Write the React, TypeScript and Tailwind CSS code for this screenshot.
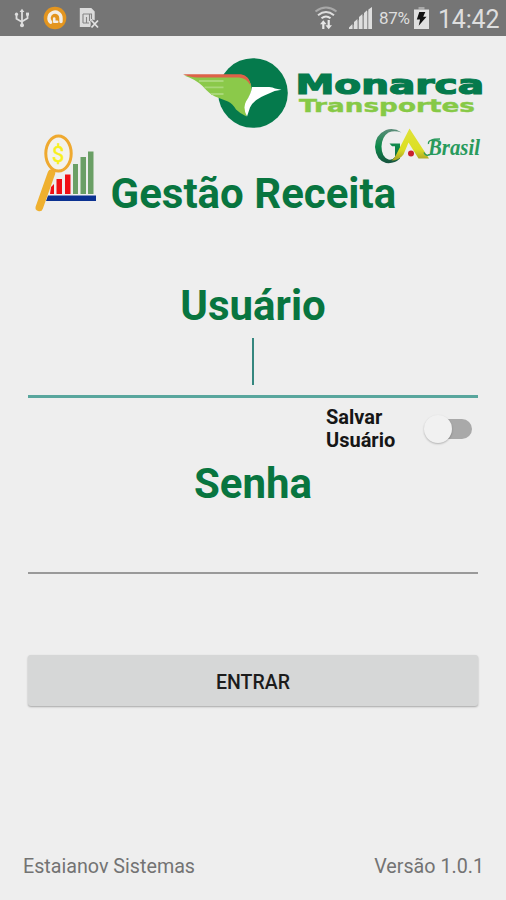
import React, { useState } from 'react'

function UsbIcon() {
    return (
        <svg className="w-[16px] h-[20px]" viewBox="0 0 16 20" fill="none" stroke="#dedede" strokeWidth="1.8">
            <path d="M8 2v15M2.5 6.5v4.3L8 14M13.5 6v4.3L8 13.5" />
            <path d="M5.6 4 8 .8 10.4 4z" fill="#dedede" stroke="none" />
            <circle cx="8" cy="17.2" r="2" fill="#dedede" stroke="none" />
            <circle cx="2.5" cy="6.2" r="1.6" fill="#dedede" stroke="none" />
            <path d="M12 4.6h3v3h-3z" fill="#dedede" stroke="none" />
        </svg>
    )
}

function AvastIcon() {
    return (
        <svg className="w-[24px] h-[24px]" viewBox="0 0 24 24" fill="none">
            <circle cx="12" cy="12" r="11.3" fill="#e3951f" />
            <path d="M7.6 16.2A6 6 0 1 1 18 12.2v3.4" stroke="#f3eee6" strokeWidth="3.4" strokeLinecap="round" />
            <path d="M11.2 12.5v3.2h3" stroke="#f3eee6" strokeWidth="2.6" strokeLinecap="round" strokeLinejoin="round" />
        </svg>
    )
}

function SimIcon() {
    return (
        <svg className="w-[20px] h-[22px]" viewBox="0 0 20 22" fill="none">
            <path d="M.8 1h11.5l3.4 3.6V13l-4 1.5V20H.8z" fill="#dcdcdc" />
            <path d="M4 7h9M4 7v9M7.5 10v6M10.5 7v7M4 16h6M12.5 7v5" stroke="#858585" strokeWidth="1.1" />
            <path d="m12.5 13.5 6.5 7M19 13.5l-6.5 7" stroke="#757575" strokeWidth="3.6" />
            <path d="m12.5 13.5 6.5 7M19 13.5l-6.5 7" stroke="#e2e2e2" strokeWidth="1.8" />
        </svg>
    )
}

function WifiIcon() {
    return (
        <svg className="w-[24px] h-[24px]" viewBox="0 0 24 24" fill="none" strokeWidth="2">
            <path d="M1.5 5.5Q12-2.3 22.5 5.5" stroke="#a8a8a8" />
            <path d="M4 9.2q8-6.4 16 0" stroke="#dedede" />
            <path d="M7.5 12.3q4.5-3.6 9 0" stroke="#e6e6e6" />
            <path d="M9.3 23v-6M14.7 14v6" stroke="#e6e6e6" strokeWidth="2.2" />
            <path d="m6 18.2 3.3-4 3.3 4zM11.4 19.3l3.3 4 3.3-4z" fill="#e6e6e6" />
        </svg>
    )
}

function SignalIcon() {
    return (
        <svg className="w-[23px] h-[22px]" viewBox="0 0 23 22">
            <path d="M0 22 23 0v22z" fill="#979797" />
            <path d="M0 22v-1.5L3.4 17v5zM5 22v-7l3.4-3v10zM10 22V10l3.4-3v15zM15 22V6l3-2.7V22zM19.4 22V2.4L23 0v22z" fill="#dedede" />
        </svg>
    )
}

function BatteryIcon() {
    return (
        <svg className="w-[15px] h-[22px]" viewBox="0 0 15 22">
            <path d="M4.5 0h6v2.5h-6z" fill="#a9a9a9" />
            <path d="M0 2.5h15V22H0z" fill="#e0e0e0" />
            <path d="M5.3 5h6L9.2 9.8h3.3L4.7 18.8l1.4-6.4H2.8z" fill="#111" />
        </svg>
    )
}

function MonarcaLogo() {
    return (
        <svg className="w-[306px] h-[74px]" viewBox="183 56 306 74">
            <circle cx="253" cy="93" r="34.8" fill="#057a4c" />
            <path d="M184 75.5H243Q251 79 251.5 88 251.5 93 248 99 245 105 246.5 116.5 240 113.5 236 109.5 232.5 103.5 228 101.5L215 96.5Q209.5 94 202.5 86 195 79 184 75.5z" fill="#8bc94a" />
            <path d="M183 74.2H241Q249.5 75.5 251 86 246.5 77.8 239 77.5H198Q189 77.3 183 74.2z" fill="#dd6248" />
            <path d="M199 81h24.5M204.5 87.3h19M211 94h12.5" stroke="#a9d878" strokeWidth="1.8" />
            <path d="M252 87H268Q272.5 86.7 275 88.5L281.5 89.7Q274 90.5 269 93.5 254 99 250 107.5L247 116.5Q242.5 108 246 101.5 251 94 252 87z" fill="#fff" />
            <text x="295.5" y="93.5" textLength="188.5" lengthAdjust="spacingAndGlyphs" fill="#057a4c" stroke="#057a4c" strokeWidth="1.2" className="font-['DejaVu_Sans',sans-serif] font-bold text-[26px]">Monarca</text>
            <text x="299" y="111.7" textLength="176" lengthAdjust="spacingAndGlyphs" fill="#86c946" stroke="#86c946" strokeWidth=".4" className="font-['DejaVu_Sans',sans-serif] font-bold text-[18px]">Transportes</text>
        </svg>
    )
}

function GaBrasilLogo() {
    return (
        <svg className="w-[114px] h-[38px]" viewBox="372 127 114 38">
            <defs>
                <linearGradient id="ga-g" x1="0" y1="0" x2="0" y2="1">
                    <stop offset="0" stopColor="#5d8c7a" />
                    <stop offset=".5" stopColor="#0c8a4a" />
                    <stop offset="1" stopColor="#17533f" />
                </linearGradient>
                <linearGradient id="ga-a" x1="0" y1="0" x2="0" y2="1">
                    <stop offset="0" stopColor="#dfe23a" />
                    <stop offset=".65" stopColor="#dcdf25" />
                    <stop offset="1" stopColor="#a8a022" />
                </linearGradient>
            </defs>
            <path d="M401.5 132.5Q394 127.3 386 130 375 135 375 147 376 160 386 163 394.5 164 400 158.5V143.5H389.5L392 146.3H395V157Q392.5 160.3 388.5 159.5 381.5 157 381.5 146.5 382 136.5 388.5 132.5 394.5 129.8 401.5 132.5z" fill="url(#ga-g)" />
            <path d="M409.5 128.5 429 158.5H418.5L408.5 142.5 403.5 154.5Q399 160.5 391.5 160.5 394.5 158.5 396 155z" fill="url(#ga-a)" />
            <circle cx="411" cy="153.5" r="3" fill="#c91f2e" />
            <text x="428" y="155" textLength="52" lengthAdjust="spacingAndGlyphs" fill="#289a5c" className="font-['Liberation_Serif',serif] font-bold italic text-[23px]">Brasil</text>
            <path d="M428.5 144Q427.5 139 440 139M424 152.5Q426 157.5 432 153.5" fill="none" stroke="#289a5c" strokeWidth="1.3" />
        </svg>
    )
}

function ChartIcon() {
    return (
        <svg className="w-[64px] h-[82px]" viewBox="34 132 64 82">
            <path d="M48 195.5h48v5.5H46z" fill="#0b3191" />
            <path d="M51 187l3-3v10h-4zM56.5 179h5.500v15h-5.500zM65 174.5h5.500V194H65z" fill="#f00f14" />
            <path d="M73 164h5v30h-5zM80.5 157h5.500v37h-5.500zM88 151.5h5.500V194H88z" fill="#6a9f65" />
            <path d="M51.5 173 39.3 207.5" stroke="#efb02f" strokeWidth="7.5" strokeLinecap="round" />
            <ellipse cx="58.5" cy="153.5" rx="12.7" ry="17.5" fill="#f3f2ec" stroke="#efa92f" strokeWidth="3" />
            <text x="58.3" y="162" textAnchor="middle" fill="#f8f01c" stroke="#f8f01c" strokeWidth=".5" className="font-['Roboto',sans-serif] text-[22px]">$</text>
        </svg>
    )
}

export default function App() {
    const [user, setUser] = useState('')
    const [password, setPassword] = useState('')
    const [save, setSave] = useState(false)

    return (
        <main className="w-full h-[900px] flex flex-col overflow-hidden bg-[#eeeeee] font-['Roboto',sans-serif]">
            {/* Status bar */}
            <div className="h-[36px] shrink-0 flex items-center bg-[#757575] text-[#dedede] pl-[14px] pr-[7px]">
                <UsbIcon />
                <div className="ml-[13px]"><AvastIcon /></div>
                <div className="ml-[12px]"><SimIcon /></div>
                <div className="ml-auto"><WifiIcon /></div>
                <div className="ml-[11px]"><SignalIcon /></div>
                <span className="ml-[7px] w-[32px] text-[17px] tracking-[-0.3px] pt-[2px]">87%</span>
                <div className="ml-[3px]"><BatteryIcon /></div>
                <span className="ml-[9px] w-[61px] text-[25px] leading-none pt-[3px] tracking-[-0.2px] whitespace-nowrap">14:42</span>
            </div>

            {/* Logos and title */}
            <div className="flex justify-end pt-[20px] pr-[17px]">
                <MonarcaLogo />
            </div>
            <div className="flex pl-[34px] pr-[20px]">
                <div className="pt-[2px]"><ChartIcon /></div>
                <div className="flex-1 flex flex-col pl-[12.5px]">
                    <div className="flex justify-end -mt-[3px]"><GaBrasilLogo /></div>
                    <h1 className="mt-[5px] text-[42px] leading-[48px] font-bold text-[#08753f] whitespace-nowrap">Gestão Receita</h1>
                </div>
            </div>

            {/* Login form */}
            <form className="mt-[64px] px-[28px] flex flex-col" onSubmit={(e) => e.preventDefault()}>
                <label htmlFor="user" className="text-center text-[42px] leading-[48px] font-bold text-[#08753f]">Usuário</label>
                <div className="relative h-[68px] border-b-[3px] border-[#58a69d]">
                    <input id="user" value={user} onChange={(e) => setUser(e.target.value)} className="w-full h-full text-center text-[28px] bg-transparent outline-none" />
                    <span className="absolute left-1/2 -translate-x-1/2 top-[8px] w-[2px] h-[47px] bg-[#35877f]" />
                </div>
                <div className="flex items-center justify-end mt-[8px] h-[46px] pr-[5px]">
                    <span className="w-[98px] text-[20px] leading-[23px] font-bold text-[#161616]">Salvar Usuário</span>
                    <button type="button" role="switch" aria-checked={save} aria-label="Salvar Usuário" onClick={() => setSave(!save)} className="flex items-center w-[49px] h-[30px]">
                        <span className={`size-[28px] shrink-0 rounded-full bg-[#f1f1f1] shadow-[0_1px_2px_rgba(0,0,0,0.25)] z-10 ${save ? 'order-2 -ml-[14px]' : ''}`} />
                        <span className={`w-[34px] h-[20px] rounded-full ${save ? 'bg-[#58a69d]' : 'bg-[#a9a9a9] -ml-[14px]'}`} />
                    </button>
                </div>
                <label htmlFor="password" className="mt-[8px] text-center text-[42px] leading-[48px] font-bold text-[#08753f]">Senha</label>
                <input id="password" type="password" value={password} onChange={(e) => setPassword(e.target.value)} className="h-[66px] border-b-[2px] border-[#999999] text-center text-[28px] outline-none" />
                <button type="submit" className="mt-[81px] h-[51px] pt-[4px] rounded-[3px] bg-[#d6d7d7] shadow-[0_1px_2px_rgba(0,0,0,0.3)] text-[19.5px] font-medium text-[#1c1c1c]">ENTRAR</button>
            </form>

            {/* Footer */}
            <div className="mt-auto flex justify-between pl-[23px] pr-[22px] pb-[21px] text-[19.7px] leading-[24px] text-[#737373]">
                <span>Estaianov Sistemas</span>
                <span>Versão 1.0.1</span>
            </div>
        </main>
    )
}
